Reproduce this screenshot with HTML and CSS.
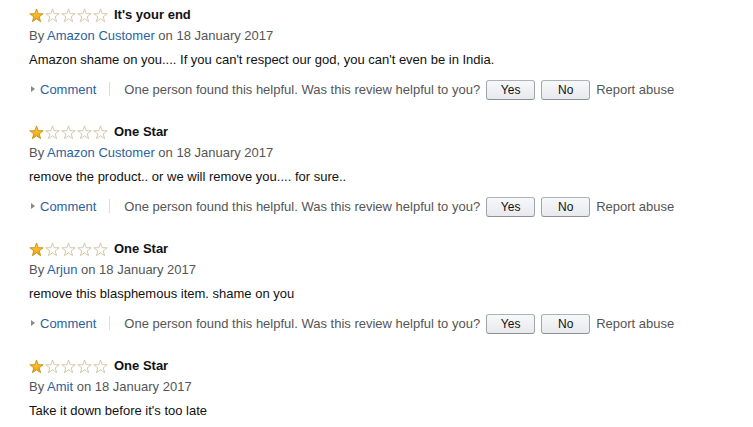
FILE: index.html
```html
<!DOCTYPE html>
<html>
<head>
<meta charset="utf-8">
<link rel="stylesheet" href="styles.css">
</head>
<body>
<svg class="defs" width="0" height="0" aria-hidden="true">
  <defs>
    <linearGradient id="gold" x1="0" y1="0" x2="0" y2="1">
      <stop offset="0" stop-color="#ffd24a"/>
      <stop offset="1" stop-color="#f0a000"/>
    </linearGradient>
    <symbol id="star" viewBox="0 0 16 16">
      <path d="M8 1 L9.76 6.07 L15.13 6.18 L10.85 9.43 L12.41 14.57 L8 11.5 L3.59 14.57 L5.15 9.43 L0.87 6.18 L6.24 6.07 Z"/>
    </symbol>
  </defs>
</svg>
<div class="reviews">
  <div class="review">
    <div class="title-row">
      <span class="stars">
        <svg class="star full"><use href="#star"/></svg><svg class="star"><use href="#star"/></svg><svg class="star"><use href="#star"/></svg><svg class="star"><use href="#star"/></svg><svg class="star"><use href="#star"/></svg>
      </span>
      <span class="title">It's your end</span>
    </div>
    <div class="byline">By <a class="link">Amazon Customer</a> on 18 January 2017</div>
    <div class="body">Amazon shame on you.... If you can't respect our god, you can't even be in India.</div>
    <div class="actions">
      <span class="tri"></span><a class="link">Comment</a><span class="sep"></span>
      <span class="helpful">One person found this helpful. Was this review helpful to you?</span>
      <button class="btn">Yes</button><button class="btn">No</button>
      <span class="report">Report abuse</span>
    </div>
  </div>
  <div class="review">
    <div class="title-row">
      <span class="stars">
        <svg class="star full"><use href="#star"/></svg><svg class="star"><use href="#star"/></svg><svg class="star"><use href="#star"/></svg><svg class="star"><use href="#star"/></svg><svg class="star"><use href="#star"/></svg>
      </span>
      <span class="title">One Star</span>
    </div>
    <div class="byline">By <a class="link">Amazon Customer</a> on 18 January 2017</div>
    <div class="body">remove the product.. or we will remove you.... for sure..</div>
    <div class="actions">
      <span class="tri"></span><a class="link">Comment</a><span class="sep"></span>
      <span class="helpful">One person found this helpful. Was this review helpful to you?</span>
      <button class="btn">Yes</button><button class="btn">No</button>
      <span class="report">Report abuse</span>
    </div>
  </div>
  <div class="review">
    <div class="title-row">
      <span class="stars">
        <svg class="star full"><use href="#star"/></svg><svg class="star"><use href="#star"/></svg><svg class="star"><use href="#star"/></svg><svg class="star"><use href="#star"/></svg><svg class="star"><use href="#star"/></svg>
      </span>
      <span class="title">One Star</span>
    </div>
    <div class="byline">By <a class="link">Arjun</a> on 18 January 2017</div>
    <div class="body">remove this blasphemous item. shame on you</div>
    <div class="actions">
      <span class="tri"></span><a class="link">Comment</a><span class="sep"></span>
      <span class="helpful">One person found this helpful. Was this review helpful to you?</span>
      <button class="btn">Yes</button><button class="btn">No</button>
      <span class="report">Report abuse</span>
    </div>
  </div>
  <div class="review">
    <div class="title-row">
      <span class="stars">
        <svg class="star full"><use href="#star"/></svg><svg class="star"><use href="#star"/></svg><svg class="star"><use href="#star"/></svg><svg class="star"><use href="#star"/></svg><svg class="star"><use href="#star"/></svg>
      </span>
      <span class="title">One Star</span>
    </div>
    <div class="byline">By <a class="link">Amit</a> on 18 January 2017</div>
    <div class="body">Take it down before it's too late</div>
  </div>
</div>
</body>
</html>
```
FILE: styles.css
```css
html, body {
  margin: 0;
  padding: 0;
  background: #fff;
}
body {
  font-family: "Liberation Sans", Arial, sans-serif;
  font-size: 13px;
  color: #111;
  overflow: hidden;
}
.defs {
  position: absolute;
  width: 0;
  height: 0;
}
.reviews {
  padding: 5px 0 0 29px;
}
.review {
  margin-bottom: 23px;
}
.title-row {
  display: flex;
  align-items: center;
  height: 20px;
}
.stars {
  display: flex;
  gap: 1px;
  margin-right: 6px;
}
.star {
  width: 15px;
  height: 15px;
  fill: #fff;
  stroke: #cdbf9a;
  stroke-width: 0.9;
}
.star.full {
  fill: url(#gold);
  stroke: #c08a10;
}
.title {
  font-weight: bold;
  line-height: 20px;
}
.byline {
  margin-top: 1px;
  line-height: 20px;
  color: #555;
}
.link {
  color: #2b5f9f;
  text-decoration: none;
}
.body {
  margin-top: 4px;
  line-height: 20px;
}
.actions {
  margin-top: 9px;
  height: 20px;
  display: flex;
  align-items: center;
  color: #555;
}
.tri {
  width: 0;
  height: 0;
  border-top: 3px solid transparent;
  border-bottom: 3px solid transparent;
  border-left: 4px solid #888;
  margin: 0 5px 0 2px;
}
.sep {
  width: 1px;
  height: 14px;
  background: #ddd;
  margin: 0 14px 0 13px;
}
.helpful {
  margin-right: 6px;
}
.btn {
  width: 49px;
  height: 20px;
  margin: 1px 6px 0 0;
  padding: 0;
  font-family: "Liberation Sans", Arial, sans-serif;
  font-size: 12px;
  color: #111;
  background: linear-gradient(#f7f8fa, #e7e9ec);
  border: 1px solid #adb1b8;
  border-color: #adb1b8 #a2a6ac #8d9096;
  border-radius: 3px;
}
.report {
  color: #555;
}
```
